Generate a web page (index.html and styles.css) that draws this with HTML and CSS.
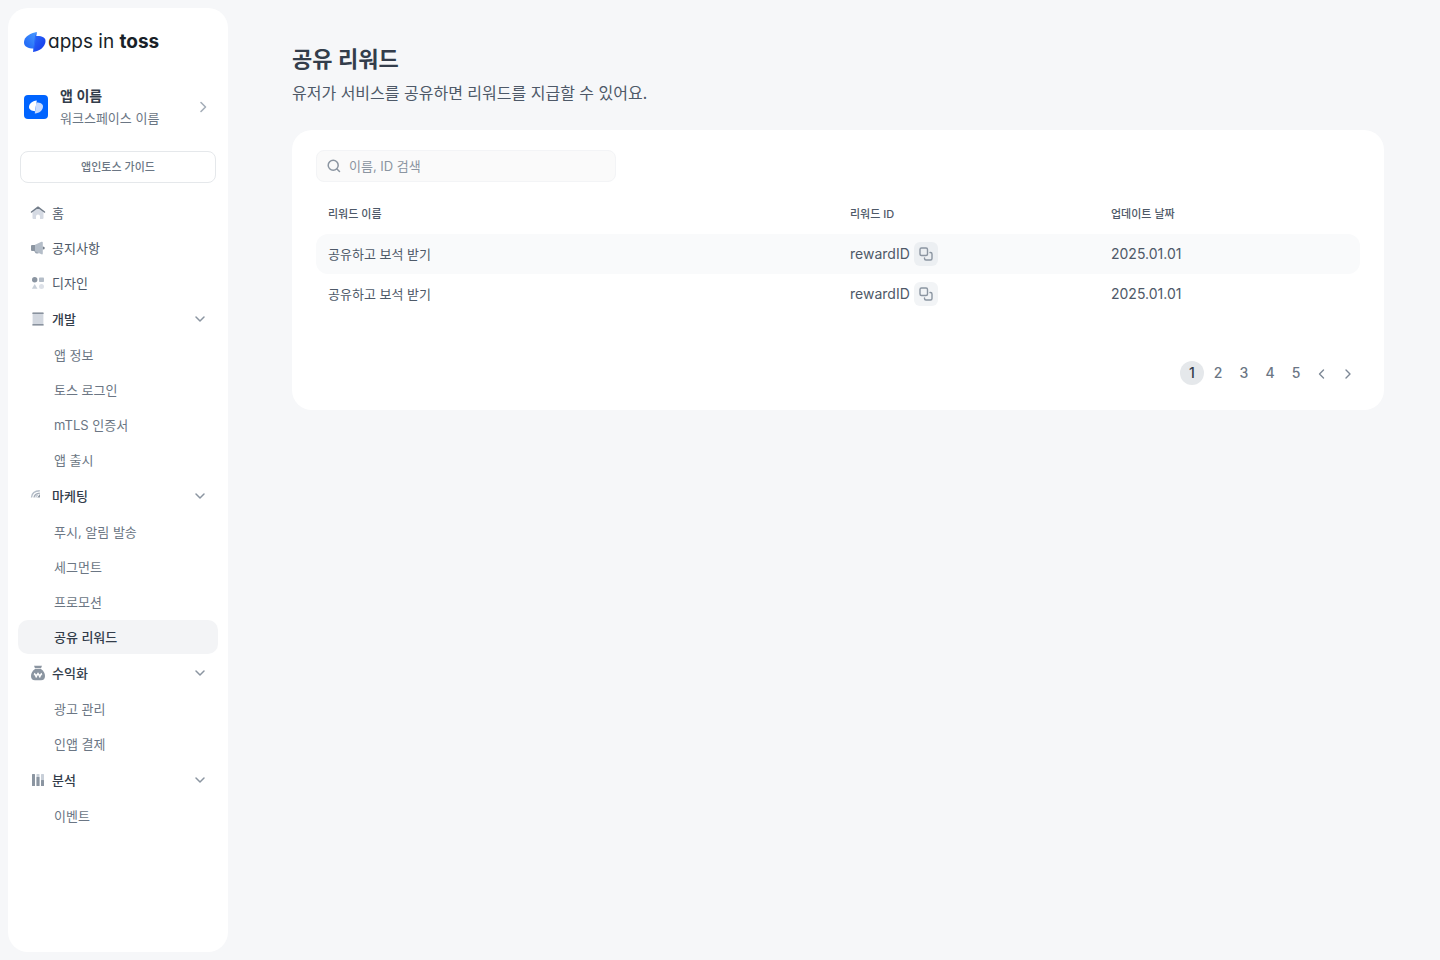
FILE: index.html
```
<!DOCTYPE html>
<html lang="ko">
<head>
    <meta charset="UTF-8">
    <meta name="viewport" content="width=device-width, initial-scale=1.0">
    <title>공유 리워드</title>
    <link rel="stylesheet" href="styles.css">
</head>
<body>
    <aside class="sidebar">
        <a class="logo" href="#">
            <svg width="24" height="22" viewBox="0 0 24 22" aria-hidden="true">
                <defs>
                    <linearGradient id="logo-left" x1="1" y1="0" x2="0" y2="1">
                        <stop offset="0" stop-color="#4a9bff"/>
                        <stop offset="1" stop-color="#1c62f5"/>
                    </linearGradient>
                    <linearGradient id="logo-right" x1="0" y1="0" x2="1" y2="1">
                        <stop offset="0" stop-color="#2a6bfa"/>
                        <stop offset="1" stop-color="#1434e8"/>
                    </linearGradient>
                </defs>
                <path d="M12.800 1C12.800 1 0 3 0 11.500C0 15.500 4 17.500 10 17.500Z" fill="url(#logo-left)"/>
                <path d="M11.600 5C17.500 4.600 21.500 6 21.500 10C21.500 15.500 15.500 20.500 9 21Z" fill="url(#logo-right)"/>
                <path d="M12.800 1L12.200 5L10.200 17.500L9 21L11 5Z" fill="#2a6bfa"/>
            </svg>
            <span class="logo-text">apps in <b>toss</b></span>
        </a>

        <a class="workspace" href="#">
            <svg width="24" height="24" viewBox="0 0 24 24" aria-hidden="true">
                <rect width="24" height="24" rx="4" fill="#0064ff"/>
                <path d="M12.800 5.500C8 6 5 9 5 12C5 14.500 7.500 16 11 16.200Z" fill="#fff"/>
                <path d="M12.300 7.500C16.500 7.500 19 9 19 11.500C19 15 15.500 18.300 10.800 18.600Z" fill="#c9dcff"/>
            </svg>
            <span class="workspace-text">
                <strong>앱 이름</strong>
                <span>워크스페이스 이름</span>
            </span>
            <svg width="16" height="16" viewBox="0 0 16 16" fill="none" stroke="#a5aeb9" stroke-width="1.600" stroke-linecap="round" stroke-linejoin="round" aria-hidden="true">
                <path d="M6 3.500L10.500 8L6 12.500"/>
            </svg>
        </a>

        <button class="guide" type="button">앱인토스 가이드</button>

        <nav class="menu">
            <a class="item" href="#">
                <svg width="16" height="16" viewBox="0 0 16 16" aria-hidden="true">
                    <path d="M2.500 6.500L8 2.500L13.500 6.500V13Q13.500 14 12.500 14H10V11.500Q10 9.500 8 9.500T6 11.500V14H3.500Q2.500 14 2.500 13Z" fill="#d5dae3"/>
                    <path d="M1.500 7L8 2.200L14.500 7" fill="none" stroke="#727c89" stroke-width="1.500" stroke-linecap="round" stroke-linejoin="round"/>
                </svg>
                홈
            </a>
            <a class="item" href="#">
                <svg width="16" height="16" viewBox="0 0 16 16" aria-hidden="true">
                    <path d="M4 10.500H8.500V13.500H6.500Q5.500 13.500 5.200 12.800Z" fill="#9aa4b1"/>
                    <path d="M4.500 5L11.500 1.800Q12.800 1.400 12.800 2.600V13.600Q12.800 14.800 11.500 14.200L4.500 11Z" fill="#b4bdc8"/>
                    <path d="M1 6Q1 5 2 5H5V11H2Q1 11 1 10Z" fill="#8b95a1"/>
                    <path d="M12.800 6.500Q14.800 6.500 14.800 8T12.800 9.500Z" fill="#727c89"/>
                </svg>
                공지사항
            </a>
            <a class="item" href="#">
                <svg width="16" height="16" viewBox="0 0 16 16" aria-hidden="true">
                    <circle cx="4.700" cy="4.800" r="2.700" fill="#8b95a1"/>
                    <rect x="9" y="2.500" width="5" height="4.600" rx=".8" fill="#b4bdc8"/>
                    <path d="M4.700 9L7.500 13.800H1.900Z" fill="#c8cfd8"/>
                    <circle cx="11.500" cy="11.500" r="2.500" fill="#dde1e8"/>
                </svg>
                디자인
            </a>

            <button class="item group" type="button" aria-expanded="true">
                <svg width="16" height="16" viewBox="0 0 16 16" aria-hidden="true">
                    <rect x="2.600" y="2" width="10.800" height="12" fill="#d2d7df"/>
                    <rect x="2.300" y="1.500" width="11.400" height="1.300" rx=".6" fill="#727c89"/>
                    <rect x="2.300" y="13.200" width="11.400" height="1.300" rx=".6" fill="#727c89"/>
                </svg>
                개발
                <svg class="chevron" width="16" height="16" viewBox="0 0 16 16" aria-hidden="true"><path d="M4 6L8 10L12 6"/></svg>
            </button>
            <a class="item sub" href="#">앱 정보</a>
            <a class="item sub" href="#">토스 로그인</a>
            <a class="item sub" href="#">mTLS 인증서</a>
            <a class="item sub" href="#">앱 출시</a>

            <button class="item group" type="button" aria-expanded="true">
                <svg width="16" height="16" viewBox="0 0 16 16" fill="none" stroke-width="1.400" aria-hidden="true">
                    <path d="M1.500 9.500Q2 3 9.800 2.800" stroke="#b4bdc8"/>
                    <path d="M4 9.500Q4.500 5.500 9.800 5.200" stroke="#a5aeb9"/>
                    <path d="M6 9.500Q6.300 7 8 7" stroke="#c8cfd8"/>
                    <path d="M7.200 9.500L10 6V9.500Z" fill="#8b95a1"/>
                </svg>
                마케팅
                <svg class="chevron" width="16" height="16" viewBox="0 0 16 16" aria-hidden="true"><path d="M4 6L8 10L12 6"/></svg>
            </button>
            <a class="item sub" href="#">푸시, 알림 발송</a>
            <a class="item sub" href="#">세그먼트</a>
            <a class="item sub" href="#">프로모션</a>
            <a class="item sub active" href="#" aria-current="page">공유 리워드</a>

            <button class="item group" type="button" aria-expanded="true">
                <svg width="16" height="16" viewBox="0 0 16 16" aria-hidden="true">
                    <path d="M4 .8H12L11 3.300H5Z" fill="#8b95a1"/>
                    <path d="M5 4H11Q15 7 15 11Q15 15.200 11 15.200H5Q1 15.200 1 11Q1 7 5 4Z" fill="#8b95a1"/>
                    <path d="M4.500 8L6.200 12.300L8 8L9.800 12.300L11.500 8M3.800 9.800H12.200" fill="none" stroke="#fff" stroke-width="1.100" stroke-linejoin="round"/>
                </svg>
                수익화
                <svg class="chevron" width="16" height="16" viewBox="0 0 16 16" aria-hidden="true"><path d="M4 6L8 10L12 6"/></svg>
            </button>
            <a class="item sub" href="#">광고 관리</a>
            <a class="item sub" href="#">인앱 결제</a>

            <button class="item group" type="button" aria-expanded="true">
                <svg width="16" height="16" viewBox="0 0 16 16" aria-hidden="true">
                    <rect x="2" y="2" width="3" height="12" rx=".5" fill="#8b95a1"/>
                    <rect x="6.500" y="2" width="3" height="12" rx=".5" fill="#c8cfd8"/>
                    <rect x="6.500" y="5" width="3" height="9" rx=".5" fill="#8b95a1"/>
                    <rect x="11" y="2" width="3" height="12" rx=".5" fill="#c8cfd8"/>
                    <rect x="11" y="8" width="3" height="6" rx=".5" fill="#8b95a1"/>
                </svg>
                분석
                <svg class="chevron" width="16" height="16" viewBox="0 0 16 16" aria-hidden="true"><path d="M4 6L8 10L12 6"/></svg>
            </button>
            <a class="item sub" href="#">이벤트</a>
        </nav>
    </aside>

    <main class="content">
        <h1>공유 리워드</h1>
        <p class="description">유저가 서비스를 공유하면 리워드를 지급할 수 있어요.</p>

        <section class="card">
            <label class="search">
                <svg width="16" height="16" viewBox="0 0 16 16" fill="none" stroke="#8b95a1" stroke-width="1.500" stroke-linecap="round" aria-hidden="true">
                    <circle cx="7.200" cy="7.200" r="5"/>
                    <path d="M11 11L13.500 13.500"/>
                </svg>
                <input type="search" placeholder="이름, ID 검색" aria-label="이름, ID 검색">
            </label>

            <table class="rewards">
                <thead>
                    <tr>
                        <th class="col-name">리워드 이름</th>
                        <th class="col-id">리워드 ID</th>
                        <th class="col-date">업데이트 날짜</th>
                    </tr>
                </thead>
                <tbody>
                    <tr>
                        <td>공유하고 보석 받기</td>
                        <td>
                            <div class="reward-id">
                                <span>rewardID</span>
                                <button class="copy" type="button" aria-label="복사">
                                    <svg width="16" height="16" viewBox="0 0 16 16" aria-hidden="true"><rect x="2" y="2" width="7.500" height="7.500" rx="1.500"/><path d="M12 6.500H12.500Q14 6.500 14 8V12.500Q14 14 12.500 14H8Q6.500 14 6.500 12.500V12"/></svg>
                                </button>
                            </div>
                        </td>
                        <td class="number">2025.01.01</td>
                    </tr>
                    <tr>
                        <td>공유하고 보석 받기</td>
                        <td>
                            <div class="reward-id">
                                <span>rewardID</span>
                                <button class="copy" type="button" aria-label="복사">
                                    <svg width="16" height="16" viewBox="0 0 16 16" aria-hidden="true"><rect x="2" y="2" width="7.500" height="7.500" rx="1.500"/><path d="M12 6.500H12.500Q14 6.500 14 8V12.500Q14 14 12.500 14H8Q6.500 14 6.500 12.500V12"/></svg>
                                </button>
                            </div>
                        </td>
                        <td class="number">2025.01.01</td>
                    </tr>
                </tbody>
            </table>

            <nav class="pagination" aria-label="페이지">
                <button class="page current" type="button" aria-current="page">1</button>
                <button class="page" type="button">2</button>
                <button class="page" type="button">3</button>
                <button class="page" type="button">4</button>
                <button class="page" type="button">5</button>
                <button class="page" type="button" aria-label="이전">
                    <svg class="arrow" width="16" height="16" viewBox="0 0 16 16" aria-hidden="true"><path d="M9.500 5L5.500 9L9.500 13"/></svg>
                </button>
                <button class="page" type="button" aria-label="다음">
                    <svg class="arrow" width="16" height="16" viewBox="0 0 16 16" aria-hidden="true"><path d="M6 5L10 9L6 13"/></svg>
                </button>
            </nav>
        </section>
    </main>
</body>
</html>
```
FILE: styles.css
```
* {
    box-sizing: border-box;
}

body {
    display: flex;
    align-items: flex-start;
    min-height: 100vh;
    margin: 0;
    padding: 8px;
    background-color: #f6f7f9;
    color: #4e5968;
    font-family: Inter, "Noto Sans CJK KR", sans-serif;
    font-size: 13px;
    line-height: 20px;
}

a {
    color: inherit;
    text-decoration: none;
}

button,
input {
    margin: 0;
    padding: 0;
    border: none;
    background: none;
    color: inherit;
    font: inherit;
}

button {
    cursor: pointer;
}

svg {
    flex: none;
}

.sidebar {
    flex: none;
    width: 220px;
    min-height: calc(100vh - 16px);
    padding: 20px 10px;
    border-radius: 20px;
    background-color: #fff;
}

.logo {
    display: flex;
    align-items: center;
    height: 28px;
    padding: 0 6px;
    color: #191f28;
}

.logo-text {
    font-size: 19px;
    font-feature-settings: "cv11";
    white-space: nowrap;
}

.workspace {
    display: flex;
    align-items: center;
    gap: 12px;
    margin-top: 28px;
    padding: 0 7px 0 6px;
}

.workspace-text {
    display: flex;
    flex: 1;
    flex-direction: column;
    color: #6b7684;
    line-height: 23px;
}

.workspace-text strong {
    color: #333d4b;
    font-size: 14px;
    font-weight: 600;
}

.guide {
    display: block;
    width: calc(100% - 4px);
    height: 32px;
    margin: 21px 2px 13px;
    border: 1px solid #e5e8eb;
    border-radius: 8px;
    color: #6b7684;
    font-size: 11px;
    font-weight: 500;
}

.menu {
    display: flex;
    flex-direction: column;
    gap: 1px;
}

.item {
    display: flex;
    align-items: center;
    gap: 6px;
    height: 34px;
    padding: 0 10px 0 12px;
    border-radius: 10px;
    text-align: left;
}

.item:hover,
.item.active {
    background-color: #f3f4f6;
}

.item.group {
    height: 36px;
    color: #333d4b;
    font-weight: 500;
}

.item.sub {
    padding-left: 36px;
    color: #6b7684;
}

.item.active {
    color: #333d4b;
    font-weight: 500;
}

.chevron {
    margin-left: auto;
    fill: none;
    stroke: #8b95a1;
    stroke-width: 1.5;
    stroke-linecap: round;
    stroke-linejoin: round;
}

.content {
    flex: 1;
    min-width: 0;
    padding: 35px 48px 36px 64px;
}

h1 {
    margin: 0;
    color: #333d4b;
    font-size: 22px;
    font-weight: 600;
    line-height: 32px;
}

.description {
    margin: 5px 0 26px;
    font-family: "Noto Sans CJK KR", sans-serif;
    font-size: 16px;
    line-height: 24px;
}

.card {
    padding: 20px 24px 25px;
    border-radius: 20px;
    background-color: #fff;
}

.search {
    display: flex;
    align-items: center;
    gap: 7px;
    width: 300px;
    max-width: 100%;
    height: 32px;
    padding: 0 9px;
    border: 1px solid #f3f4f6;
    border-radius: 8px;
    background-color: #fafafa;
}

.search input {
    flex: 1;
    min-width: 0;
    outline: none;
}

.search input::placeholder {
    color: #8b95a1;
}

.rewards {
    width: 100%;
    margin-top: 12px;
    border-spacing: 0;
    table-layout: fixed;
}

.rewards th,
.rewards td {
    height: 40px;
    padding: 0 12px;
    text-align: left;
}

.rewards th {
    font-size: 11px;
    font-weight: 500;
}

.col-name {
    width: 50%;
}

.col-id,
.col-date {
    width: 25%;
}

.rewards tbody tr:first-child td {
    background-color: #f9fafb;
}

.rewards td:first-child {
    border-radius: 12px 0 0 12px;
}

.rewards td:last-child {
    border-radius: 0 12px 12px 0;
}

.reward-id {
    display: flex;
    align-items: center;
    gap: 4px;
    font-size: 14px;
}

.rewards .number {
    font-size: 14px;
}

.copy {
    display: flex;
    align-items: center;
    justify-content: center;
    width: 24px;
    height: 24px;
    border-radius: 6px;
    background-color: #f2f4f6;
}

.rewards tbody tr:first-child .copy {
    background-color: #eceff2;
}

.copy svg {
    fill: none;
    stroke: #8b95a1;
    stroke-width: 1.4;
    stroke-linecap: round;
}

.pagination {
    display: flex;
    justify-content: flex-end;
    gap: 2px;
    margin-top: 47px;
}

.page {
    display: flex;
    align-items: center;
    justify-content: center;
    width: 24px;
    height: 24px;
    border-radius: 50%;
    color: #6b7684;
    font-size: 14px;
    font-weight: 500;
}

.page.current {
    background-color: #e5e8eb;
    color: #333d4b;
}

.arrow {
    fill: none;
    stroke: #7d8896;
    stroke-width: 1.4;
    stroke-linecap: round;
    stroke-linejoin: round;
}
```
